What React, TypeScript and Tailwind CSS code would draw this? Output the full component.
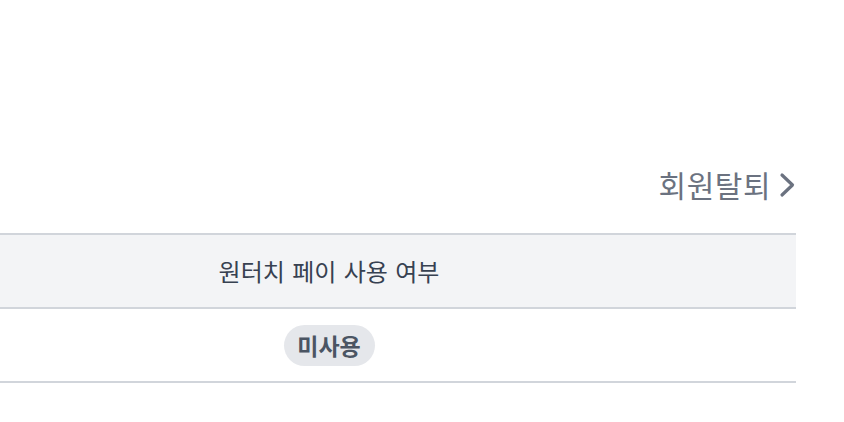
export default function App() {
  return (
    <div
      className="min-h-screen w-full bg-white pr-[48px]"
      style={{ fontFamily: '"Noto Sans CJK KR", "Noto Sans", sans-serif' }}
    >
      <div className="flex justify-end items-center gap-[8px] pt-[162px] h-[233px] pb-[27px] box-border">
        <a href="#" className="text-[30px] leading-none text-[#6b7280] tracking-[0.5px]">
          회원탈퇴
        </a>
        <svg width="17" height="26" viewBox="0 0 17 26" fill="none" className="mt-[1px]">
          <path d="M3 3 L13.5 13 L3 23" stroke="#6b7280" strokeWidth="3.2" strokeLinecap="round" strokeLinejoin="round" />
        </svg>
      </div>

      <div className="border-t-2 border-b-2 border-[#d1d5db]">
        <div className="flex items-center bg-[#f3f4f6] h-[74px] pr-[138px] border-b-2 border-[#d1d5db]">
          <div className="flex-1 text-center text-[24px] text-[#374151] [word-spacing:2px]">
            원터치 페이 사용 여부
          </div>
        </div>
        <div className="flex items-center h-[72px] pr-[138px]">
          <div className="flex-1 flex justify-center">
            <span className="inline-flex items-center justify-center h-[41px] w-[91px] rounded-full bg-[#e5e7eb] text-[23px] font-bold text-[#4b5563]">
              미사용
            </span>
          </div>
        </div>
      </div>
    </div>
  );
}
